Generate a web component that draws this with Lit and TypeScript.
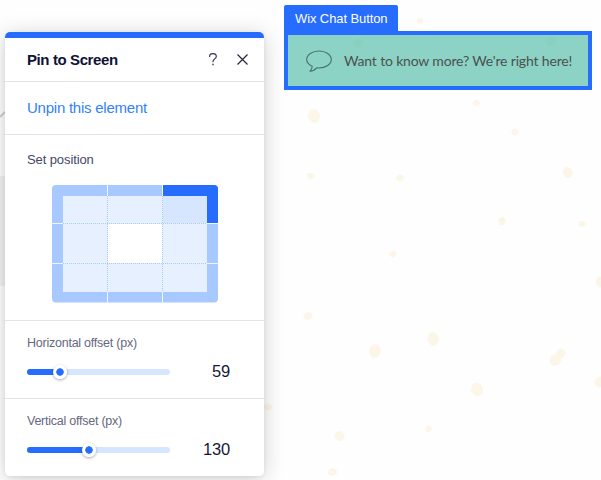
import { LitElement, html, svg, css } from "lit";
import { customElement, property } from "lit/decorators.js";

@customElement("offset-slider")
class OffsetSlider extends LitElement {
  @property() label = "";
  @property({ type: Number }) value = 0;
  @property({ type: Number }) fill = 0;

  static styles = css`
    :host { display: block; box-sizing: border-box; height: 78px; padding: 14px 34px 0 22px; }
    .label { font-size: 12.5px; line-height: 17px; letter-spacing: -0.24px; color: #65677f; white-space: nowrap; }
    .row { display: flex; justify-content: space-between; align-items: center; height: 22px; margin-top: 9px; }
    .track { width: 143px; height: 6px; border-radius: 3px; background: #d6e6fe; display: flex; align-items: center; }
    .fill { height: 6px; border-radius: 3px 0 0 3px; background: #256cff; }
    .knob { flex: none; box-sizing: border-box; width: 14px; height: 14px; margin-left: -7px; border-radius: 50%;
      background: radial-gradient(circle, #256cff 3.4px, #fff 4px); box-shadow: 0 1px 3px rgba(22, 45, 61, 0.42); }
    .value { font-size: 16.5px; letter-spacing: -0.2px; line-height: 20px; margin-top: -2px; color: #15183b; }
  `;

  render() {
    return html`
      <div class="label">${this.label}</div>
      <div class="row">
        <div class="track">
          <div class="fill" style="width:${this.fill}px"></div>
          <div class="knob"></div>
        </div>
        <div class="value">${this.value}</div>
      </div>
    `;
  }
}

@customElement("position-grid")
class PositionGrid extends LitElement {
  static styles = css`
    :host { display: block; width: 166px; height: 118px; }
    svg { display: block; }
  `;

  render() {
    return html`
      <svg width="166" height="118" viewBox="0 0 166 118">
        <rect width="166" height="117.5" rx="4" fill="#a8c9ff" />
        <path d="M111 0H162a4 4 0 0 1 4 4V38H111z" fill="#256cff" />
        <rect x="11" y="11" width="144" height="96" fill="#e7f0ff" />
        <rect x="111" y="11" width="44" height="27" fill="#d6e6fe" />
        <rect x="56" y="39" width="54" height="39" fill="#fff" />
        ${[55, 110].map((x) => svg`
          <path d="M${x + 0.5} 0V11M${x + 0.5} 107V118" stroke="#f2f7ff" />
          <path d="M${x + 0.5} 11V107" stroke="#a8c9ff" stroke-dasharray="1 1" />`)}
        ${[38, 78].map((y) => svg`
          <path d="M0 ${y + 0.5}H11M155 ${y + 0.5}H166" stroke="#f2f7ff" />
          <path d="M11 ${y + 0.5}H155" stroke="#a8c9ff" stroke-dasharray="1 1" />`)}
      </svg>
    `;
  }
}

@customElement("pin-panel")
class PinPanel extends LitElement {
  static styles = css`
    :host { display: block; box-sizing: border-box; width: 259px; height: 444px; overflow: hidden;
      background: #fff; border-top: 6px solid #256cff; border-radius: 5px; }
    .head { display: flex; align-items: center; height: 43px; padding: 0 16px 0 22px; border-bottom: 1px solid #dfe5eb; }
    .title { flex: 1; font-weight: 700; font-size: 15px; letter-spacing: -0.4px; color: #0f1235; }
    .close { margin-left: 20px; }
    .unpin { height: 52px; line-height: 52px; padding-left: 22px; font-size: 15px; letter-spacing: -0.24px;
      color: #3481fa; border-bottom: 1px solid #dfe5eb; }
    .position { height: 185px; border-bottom: 1px solid #dfe5eb; }
    .caption { padding: 17px 0 17px 22px; font-size: 13px; line-height: 16px; letter-spacing: -0.1px; color: #45476a; }
    position-grid { margin-left: 47px; }
    .horizontal { border-bottom: 1px solid #dfe5eb; }
    svg { display: block; }
  `;

  render() {
    return html`
      <div class="head">
        <div class="title">Pin to Screen</div>
        <svg width="8" height="13" viewBox="0 0 8 13" fill="none" stroke="#2a2c4c" stroke-width="1.1">
          <path d="M.6 4V3.5C.6 1.7 2 .6 4 .6s3.3 1.1 3.3 2.8c0 2.4-3.3 2.5-3.3 5.2v.6" />
          <path d="M4 10.7v1.5" stroke-width="1.3" />
        </svg>
        <svg class="close" width="11" height="11" viewBox="0 0 11 11" stroke="#23253f" stroke-width="1.2">
          <path d="M.5.5l10 10M10.5.5l-10 10" />
        </svg>
      </div>
      <div class="unpin">Unpin this element</div>
      <div class="position">
        <div class="caption">Set position</div>
        <position-grid></position-grid>
      </div>
      <offset-slider class="horizontal" label="Horizontal offset (px)" .value=${59} .fill=${33}></offset-slider>
      <offset-slider label="Vertical offset (px)" .value=${130} .fill=${62}></offset-slider>
    `;
  }
}

@customElement("chat-button")
class ChatButton extends LitElement {
  static styles = css`
    :host { display: flex; flex-direction: column; align-items: flex-start; width: 308px; }
    .tag { box-sizing: border-box; width: 114px; height: 26px; padding-left: 11px; border-radius: 2px 2px 0 0;
      background: #256cff; color: #fff; font-size: 13px; letter-spacing: -0.1px; line-height: 28px; white-space: nowrap; }
    .box { box-sizing: border-box; width: 308px; height: 59px; border: 4px solid #256cff;
      background: radial-gradient(circle at 70px 8px, #89d0c0 4px, transparent 5px),
        radial-gradient(circle at 263px 6px, #89d0c0 5px, transparent 6px), #8dd3c5;
      display: flex; align-items: center; padding-left: 18px; }
    .text { margin-left: 12px; font-family: Lato, "Liberation Sans", sans-serif; font-size: 14px;
      letter-spacing: -0.17px; color: #4a5150; white-space: nowrap; }
  `;

  render() {
    return html`
      <div class="tag">Wix Chat Button</div>
      <div class="box">
        <svg width="26" height="22" viewBox="0 0 26 22" fill="none" stroke="#45716d" stroke-width="1.1" stroke-linejoin="round">
          <path d="M6.2 16.2C2.7 14.6.7 12.2.7 9.5.7 4.800 6.200 1 13 1s12.300 3.800 12.300 8.500S19.800 18 13 18c-.8 0-1.600 0-2.300-.1C9 19.900 6.800 21 3.900 21.100 5.300 19.800 6.200 18.200 6.200 16.200z" />
        </svg>
        <div class="text">Want to know more? We're right here!</div>
      </div>
    `;
  }
}

const flecks = [
  [420, 21, 3.5, 3], [476.5, 103, 4, 3.3], [314, 116, 6.5, 7], [515, 132, 4, 3.5],
  [310.5, 176, 4, 3.3], [400, 178, 4, 3.5], [567.5, 172.5, 5.5, 5.5],
  [502, 221, 4, 4.5], [582, 224, 4, 3.3], [393, 254, 4, 3.5], [600, 282, 4.5, 5.5],
  [308, 316, 5, 4.3], [433, 339, 6.3, 7], [375, 351, 6.5, 7], [561, 353, 5, 4.5],
  [555.5, 360, 6.5, 6], [477, 389.5, 6.5, 7], [600, 382, 6, 5.5], [268, 407, 4.5, 3.5],
  [428.5, 429, 3.5, 3.5], [339.5, 436, 5.5, 5], [332.5, 472, 5, 4],
];

@customElement("app-root")
class AppRoot extends LitElement {
  static styles = css`
    :host { display: block; position: relative; width: 601px; height: 480px; overflow: hidden;
      background: #fefefe; font-family: "Liberation Sans", Arial, sans-serif; }
    .canvas { display: block; }
    .shade { position: absolute; left: 5px; top: 32px; width: 259px; height: 444px; border-radius: 5px;
      box-shadow: 0 3px 22px rgba(0, 0, 0, 0.18), 0 1px 4px rgba(0, 0, 0, 0.07); }
    pin-panel { position: absolute; left: 5px; top: 32px; }
    chat-button { position: absolute; left: 284px; top: 5px; }
  `;

  render() {
    return html`
      <svg class="canvas" width="601" height="480">
        <path d="M0 117l5-5" stroke="#cfcfcf" stroke-width="2" />
        <rect y="176" width="5" height="110" fill="#f2f2f2" />
        <g fill="#fbf6e7">
          ${flecks.map(([x, y, rx, ry], i) => svg`
            <path transform="translate(${x} ${y}) scale(${i % 2 ? -rx : rx} ${ry})"
              d="M-.9-.3Q-.6-1 0-1L.55-.75Q1-.3.95.1.8.9.15 1-.4.9-.65.6-1 .2-.9-.3z" />`)}
        </g>
      </svg>
      <div class="shade"></div>
      <pin-panel></pin-panel>
      <chat-button></chat-button>
    `;
  }
}
